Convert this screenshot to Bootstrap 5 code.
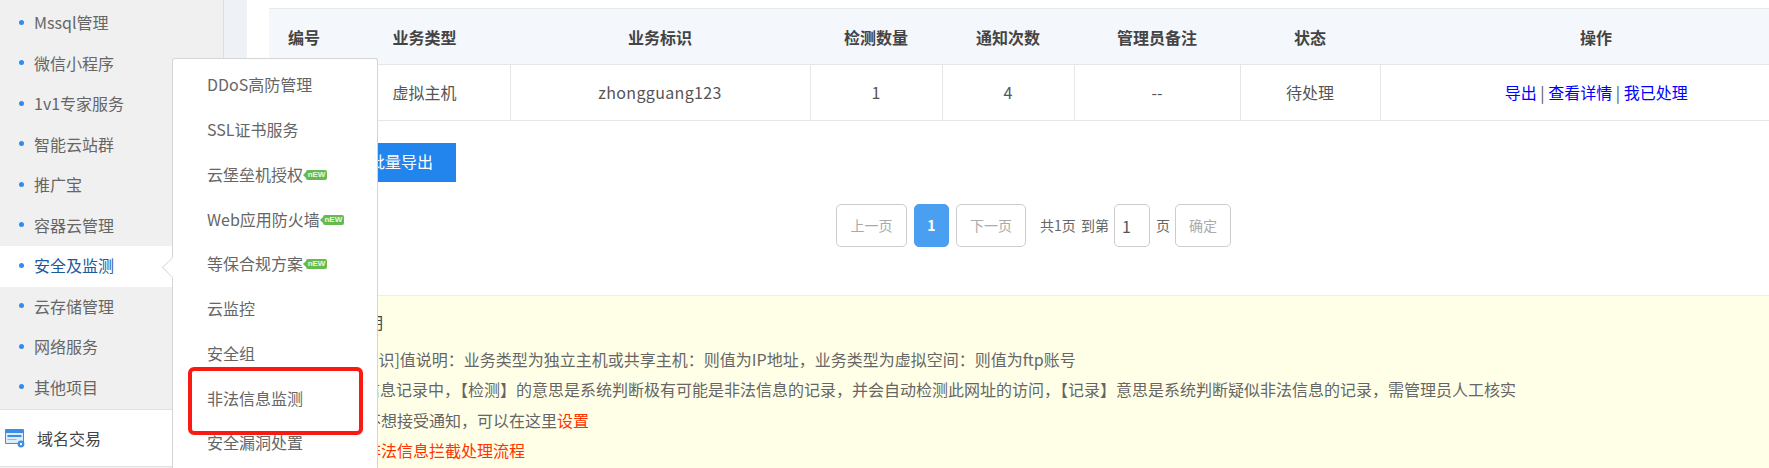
<!DOCTYPE html>
<html lang="zh"><head><meta charset="utf-8">
<link href="https://cdn.jsdelivr.net/npm/bootstrap@5.3.0/dist/css/bootstrap.min.css" rel="stylesheet">
<style>
html,body{height:468px;overflow:hidden}
body{font-family:"Noto Sans CJK SC","Open Sans",sans-serif;font-size:16px;color:#666;background:#fff}
.shell{height:468px;overflow:hidden}
.side{width:224px;flex:none;background:#f0f0f0;border-right:1px solid #ddd;height:468px}
.side-sub{height:409px;padding-top:3px}
.side-item{height:40.5px;display:flex;align-items:center;padding:0 0 2px 19px;color:#666;white-space:nowrap}
.side-item.on{background:#fff;color:#1c5a9c}
.side-dot{width:5px;height:5px;border-radius:50%;background:#2f8cf0;margin-right:10px;flex:none}
.side-main{height:58px;background:#fff;border-top:1px solid #e2e2e2;border-bottom:1px solid #e2e2e2;display:flex;align-items:center;padding-left:5px;color:#444}
.side-main svg{margin-right:12px;flex:none}
.gutter{width:23px;flex:none;background:#eef1f6}
.content{flex:1;min-width:0;background:#fff;padding:8px 0 0 22px}
.datatable{width:1543px;table-layout:fixed;border-collapse:collapse;margin:0;text-align:center}
.datatable th{height:56px;background:#f4f7fb;font-weight:700;color:#444;border-top:1px solid #e9e9e9;border-bottom:1px solid #e6e6e6;padding:0}
.datatable th:nth-child(1){width:70px}
.datatable th:nth-child(2){width:171px}
.datatable th:nth-child(3){width:300px}
.datatable th:nth-child(4),.datatable th:nth-child(5){width:132px}
.datatable th:nth-child(6){width:166px}
.datatable th:nth-child(7){width:140px}
.datatable td{height:56px;color:#555;border-bottom:1px solid #e6e6e6;border-left:1px solid #e6e6e6;padding:0 0 2px}
.datatable td:first-child{border-left:0}
.datatable a{color:#00f;text-decoration:none}
.biz-id{letter-spacing:.35px}
.export-btn{display:block;width:110px;height:39px;margin:22px 0 0 77px;background:#2285ee;color:#fff;border:0;border-radius:0;text-align:right;padding:0 23px 3px 0;font-size:16px}
.pager{margin-top:22px;padding-left:567px;height:43px;font-size:14px;color:#666}
.pg{height:43px;border:1px solid #ccc;border-radius:5px;display:flex;align-items:center;justify-content:center;color:#aaa;background:#fff;flex:none}
.pg-nav{width:71px}
.pg-next{width:70px}
.pg-cur{width:35px;background:#4a9ff0;border-color:#4a9ff0;color:#fff;font-weight:700;margin:0 7px}
.pg-total{margin-left:14px;width:41px}
.pg-goto{margin-right:5px;width:28px}
.pg-input{width:36px;color:#555;justify-content:flex-start;padding-left:7px;font-size:16px}
.pg-unit{margin:0 5px 0 6px;width:14px}
.pg-ok{width:56px}
.notice{margin-top:48px;background:#ffffe8;border-top:1px solid #eee;height:180px;padding:12px 0 0 49px;font-size:16px;color:#666;white-space:nowrap}
.notice-h{height:36px;line-height:28px;color:#444;padding-left:33px}
.notice-line{height:30.4px;line-height:30px}
.ind-l1{padding-left:7px}
.ind-l2{padding-left:14px}
.ind-a{padding-left:31px}
.ind-b{padding-left:47px}
.tx-red{color:#f30}
.flyout{position:absolute;left:172px;top:58px;width:206px;height:410px;background:#fff;border:1px solid #d5d5d5;border-bottom:0;border-radius:3px 3px 0 0;padding-top:3px}
.fly-item{height:44.75px;padding-left:34px;color:#666;white-space:nowrap;display:flex;align-items:center}
.fly-arrow{position:absolute;left:165px;top:260px;width:15px;height:15px;background:#fff;border-left:1px solid #ddd;border-bottom:1px solid #ddd;transform:rotate(45deg)}
.new-tag{position:relative;display:inline-block;width:21px;height:10px;margin-left:3px;margin-top:2px;background:#66bb4f;border-radius:2px;color:#e8f6e2;font:700 8px/10px "Liberation Sans",sans-serif;text-align:center}
.new-tag::before{content:"";position:absolute;left:-3px;top:2px;border-top:3px solid transparent;border-bottom:3px solid transparent;border-right:3px solid #66bb4f}
.redbox{position:absolute;left:188px;top:367px;width:175px;height:68px;border:4px solid #f91b12;border-radius:6px}
</style></head><body>
<div class="shell d-flex">
<aside class="side">
<div class="side-sub">
<div class="side-item"><span class="side-dot"></span>Mssql管理</div>
<div class="side-item"><span class="side-dot"></span>微信小程序</div>
<div class="side-item"><span class="side-dot"></span>1v1专家服务</div>
<div class="side-item"><span class="side-dot"></span>智能云站群</div>
<div class="side-item"><span class="side-dot"></span>推广宝</div>
<div class="side-item"><span class="side-dot"></span>容器云管理</div>
<div class="side-item on"><span class="side-dot"></span>安全及监测</div>
<div class="side-item"><span class="side-dot"></span>云存储管理</div>
<div class="side-item"><span class="side-dot"></span>网络服务</div>
<div class="side-item"><span class="side-dot"></span>其他项目</div>
</div>
<div class="side-main"><svg width="20" height="20" viewBox="0 0 20 20"><rect x="0" y="1" width="19" height="15" rx="1" fill="#3a8ee6"/><rect x="1" y="5" width="17" height="10" fill="#dcecfb"/><rect x="2.5" y="7" width="14" height="2" fill="#3a8ee6"/><rect x="2.5" y="11" width="9" height="1" fill="#8dbdf0"/><circle cx="16" cy="16" r="3.4" fill="#3a8ee6"/><circle cx="16" cy="16" r="1.2" fill="#fff"/></svg>域名交易</div>
</aside>
<div class="gutter"></div>
<main class="content">
<table class="datatable">
<thead><tr><th>编号</th><th>业务类型</th><th>业务标识</th><th>检测数量</th><th>通知次数</th><th>管理员备注</th><th>状态</th><th>操作</th></tr></thead>
<tbody><tr><td></td><td>虚拟主机</td><td class="biz-id">zhongguang123</td><td>1</td><td>4</td><td>--</td><td>待处理</td><td><a href="#">导出</a> | <a href="#">查看详情</a> | <a href="#">我已处理</a></td></tr></tbody>
</table>
<button class="btn export-btn">批量导出</button>
<div class="pager d-flex align-items-center">
<span class="pg pg-nav">上一页</span><span class="pg pg-cur">1</span><span class="pg pg-next">下一页</span>
<span class="pg-total">共1页</span><span class="pg-goto">到第</span><span class="pg pg-input">1</span><span class="pg-unit">页</span><span class="pg pg-ok">确定</span>
</div>
<div class="notice">
<div class="notice-h">说明</div>
<div class="notice-line ind-l1">[业务标识]值说明：业务类型为独立主机或共享主机：则值为IP地址，业务类型为虚拟空间：则值为ftp账号</div>
<div class="notice-line ind-l2">非法信息记录中，【检测】的意思是系统判断极有可能是非法信息的记录，并会自动检测此网址的访问，【记录】意思是系统判断疑似非法信息的记录，需管理员人工核实</div>
<div class="notice-line ind-a">如不想接受通知，可以在这里<span class="tx-red">设置</span></div>
<div class="notice-line ind-b tx-red">非法信息拦截处理流程</div>
</div>
</main>
</div>
<div class="flyout">
<div class="fly-item">DDoS高防管理</div>
<div class="fly-item">SSL证书服务</div>
<div class="fly-item">云堡垒机授权<span class="new-tag">nEW</span></div>
<div class="fly-item">Web应用防火墙<span class="new-tag">nEW</span></div>
<div class="fly-item">等保合规方案<span class="new-tag">nEW</span></div>
<div class="fly-item">云监控</div>
<div class="fly-item">安全组</div>
<div class="fly-item">非法信息监测</div>
<div class="fly-item">安全漏洞处置</div>
</div>
<div class="fly-arrow"></div>
<div class="redbox"></div>
<script src="https://cdn.jsdelivr.net/npm/bootstrap@5.3.0/dist/js/bootstrap.bundle.min.js"></script>
</body></html>
